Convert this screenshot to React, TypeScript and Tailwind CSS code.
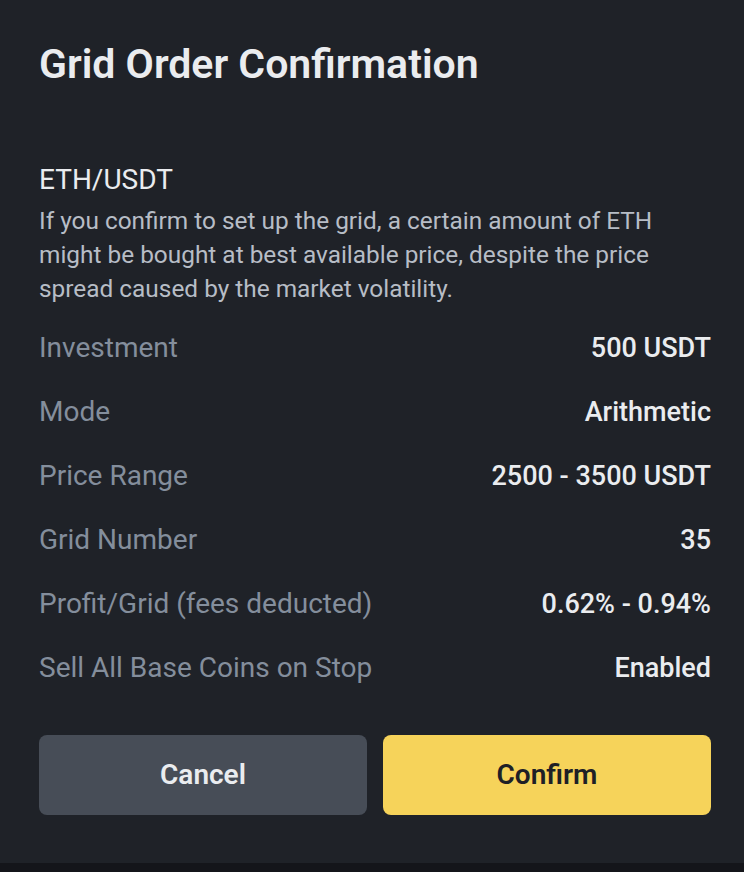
import React from "react";

const rows: [string, string][] = [
  ["Investment", "500 USDT"],
  ["Mode", "Arithmetic"],
  ["Price Range", "2500 - 3500 USDT"],
  ["Grid Number", "35"],
  ["Profit/Grid (fees deducted)", "0.62% - 0.94%"],
  ["Sell All Base Coins on Stop", "Enabled"],
];

export default function App() {
  return (
    <div className="flex h-[872px] w-[744px] flex-col bg-[#14151a] font-['Roboto',sans-serif]">
      <div className="flex h-[863px] flex-col bg-[#1f2228] pl-[39px] pr-[33px] pt-[40px]">
        <h1 className="h-[48px] text-[41px] font-semibold leading-[48px] text-[#eaecef]">
          Grid Order Confirmation
        </h1>
        <div className="mt-[76px] text-[28px] leading-[32px] text-[#eaecef]">ETH/USDT</div>
        <p className="mt-[8px] pr-[30px] text-[24.4px] leading-[34px] text-[#b7bdc6]">
          If you confirm to set up the grid, a certain amount of ETH might be bought at best available price, despite the price spread caused by the market volatility.
        </p>
        <div className="mt-[10px] flex flex-col">
          {rows.map(([k, v]) => (
            <div key={k} className="flex h-[64px] items-center justify-between">
              <span className="text-[28px] text-[#848e9c]">{k}</span>
              <span className="text-[27px] font-medium text-[#eaecef]">{v}</span>
            </div>
          ))}
        </div>
        <div className="mt-[35px] flex gap-[16px]">
          <button className="flex h-[80px] flex-1 items-center justify-center rounded-[8px] bg-[#474d57] text-[28px] font-semibold text-[#eaecef]">
            Cancel
          </button>
          <button className="flex h-[80px] flex-1 items-center justify-center rounded-[8px] bg-[#f6d35a] text-[28px] font-semibold text-[#1e2026]">
            Confirm
          </button>
        </div>
      </div>
    </div>
  );
}
